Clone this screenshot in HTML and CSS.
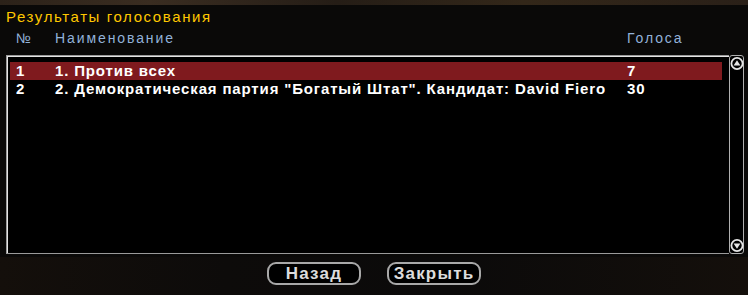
FILE: index.html
```html
<!DOCTYPE html>
<html lang="ru">
<head>
  <meta charset="UTF-8">
  <title>Результаты голосования</title>
  <link rel="stylesheet" href="styles.css">
</head>
<body>
  <div class="strip"></div>
  <div class="panel">
    <h1 class="title">Результаты голосования</h1>
    <div class="cols head">
      <span class="c-num">№</span>
      <span class="c-name">Наименование</span>
      <span class="c-votes">Голоса</span>
    </div>
    <div class="listbox">
      <div class="rows">
        <div class="cols row selected">
          <span class="c-num">1</span>
          <span class="c-name">1. Против всех</span>
          <span class="c-votes">7</span>
        </div>
        <div class="cols row">
          <span class="c-num">2</span>
          <span class="c-name">2. Демократическая партия "Богатый Штат". Кандидат: David Fiero</span>
          <span class="c-votes">30</span>
        </div>
      </div>
      <div class="scrollbar">
        <svg class="arrow" width="14" height="13" viewBox="0 0 14 13">
          <circle cx="7" cy="6.5" r="5.6" fill="#000" stroke="#e6e6e6" stroke-width="1.8"/>
          <polygon points="7,3.2 10.4,8.6 3.6,8.6" fill="#e6e6e6"/>
        </svg>
        <svg class="arrow" width="14" height="13" viewBox="0 0 14 13">
          <circle cx="7" cy="6.5" r="5.6" fill="#000" stroke="#e6e6e6" stroke-width="1.8"/>
          <polygon points="3.6,4.4 10.4,4.4 7,9.8" fill="#e6e6e6"/>
        </svg>
      </div>
    </div>
  </div>
  <div class="buttons">
    <button class="btn">Назад</button>
    <button class="btn">Закрыть</button>
  </div>
</body>
</html>
```

FILE: styles.css
```css
body {
  margin: 0;
  width: 748px;
  height: 295px;
  overflow: hidden;
  background: linear-gradient(90deg, #140f0b 0%, #0d0b0a 30%, #0b0a0a 60%, #140f0b 100%);
  font-family: "Liberation Sans", Arial, sans-serif;
}

.strip {
  height: 5px;
  background: linear-gradient(90deg, #2c2219, #3a2d21 20%, #251d16 45%, #332719 70%, #2a2018);
}

.panel {
  background-color: #0a0908;
  padding: 4px 4px 3px 6px;
}

.title {
  margin: 0;
  height: 21px;
  font-size: 15px;
  font-weight: normal;
  line-height: 16px;
  color: #ffc800;
  letter-spacing: 1.6px;
}

.cols {
  display: flex;
  white-space: nowrap;
}

.c-num {
  width: 39px;
  padding-left: 10px;
}

.c-name {
  width: 572px;
}

.head {
  height: 25px;
  font-size: 14px;
  line-height: 16px;
  color: #92b2da;
  letter-spacing: 1.9px;
}

.listbox {
  display: flex;
  height: 199px;
}

.rows {
  flex: 1;
  border: 1px solid #9a9a9a;
  border-right: none;
  box-shadow: inset 1px 1px 0 #e4e4e4;
  padding: 6px 7px 0 3px;
  background: #000;
}

.row {
  height: 18px;
  font-size: 15px;
  font-weight: bold;
  line-height: 18px;
  color: #fff;
  letter-spacing: 0.85px;
}

.row .c-num {
  width: 39px;
  padding-left: 6px;
}

.selected {
  background-color: #7f1a1e;
}

.scrollbar {
  width: 13px;
  border: 1px solid #b0b0b0;
  border-radius: 3px;
  background: #000;
  display: flex;
  flex-direction: column;
  justify-content: space-between;
  align-items: center;
  padding: 1px 0;
}

.arrow {
  display: block;
}

.buttons {
  display: flex;
  justify-content: center;
  gap: 26px;
  padding-top: 5px;
}

.btn {
  width: 94px;
  height: 23px;
  padding: 0;
  background: #000;
  border: 2px solid #a8a8a8;
  border-radius: 9px;
  color: #dcdcdc;
  font-family: "Liberation Sans", Arial, sans-serif;
  font-size: 17px;
  font-weight: bold;
  line-height: 18px;
  letter-spacing: 1.2px;
}
```
